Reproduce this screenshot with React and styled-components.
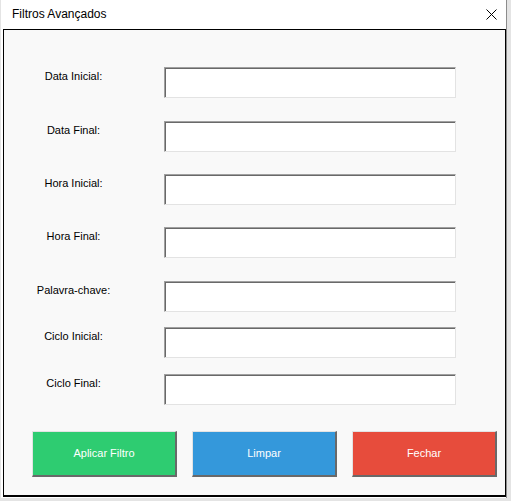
import React from "react";
import styled, { createGlobalStyle } from "styled-components";

const GlobalStyle = createGlobalStyle`
  body {
    margin: 0;
    background: #e4e4e4;
    font-family: "Liberation Sans", Arial, sans-serif;
  }
`;

const Window = styled.div`
  margin-left: 1px;
  width: 505px;
  height: 498px;
  background: #fff;
  border-right: 1px solid #8c8c8c;
  display: flex;
  flex-direction: column;
`;

const TitleBar = styled.div`
  height: 29px;
  flex-shrink: 0;
  display: flex;
  align-items: center;
  justify-content: space-between;
  padding: 0 9px 0 11px;
`;

const Title = styled.span`
  font-size: 12px;
  color: #000;
  margin-top: -1px;
`;

const CloseButton = styled.div`
  width: 12px;
  height: 12px;
  display: flex;
  align-items: center;
  justify-content: center;
`;

const Client = styled.div`
  flex-shrink: 0;
  margin-left: 2px;
  width: 501px;
  height: 428px;
  background: #f9f9f9;
  border: 1px solid #000;
  border-bottom-width: 2px;
  padding-top: 37px;
  box-sizing: content-box;
  display: flex;
  flex-direction: column;
`;

const Row = styled.div`
  display: grid;
  grid-template-columns: 139px 292px;
  column-gap: 21px;
  margin-bottom: ${(props) => props.$space}px;
`;

const Label = styled.label`
  font-size: 11px;
  line-height: 13px;
  padding-top: 3px;
  text-align: center;
  color: #000;
`;

const Input = styled.input`
  box-sizing: border-box;
  height: 31px;
  margin: 0;
  padding: 0 4px;
  background: #fff;
  border-top: 1px solid #a0a0a0;
  border-left: 1px solid #a0a0a0;
  border-right: 1px solid #e3e3e3;
  border-bottom: 1px solid #e3e3e3;
  box-shadow: inset 1px 1px 0 #696969;
  outline: none;
  font-family: "Liberation Sans", Arial, sans-serif;
  font-size: 11px;
`;

const ButtonRow = styled.div`
  display: flex;
  gap: 15px;
  padding-left: 28px;
  margin-top: 10px;
`;

const Button = styled.button`
  box-sizing: border-box;
  width: 145px;
  height: 46px;
  margin: 0;
  background: ${(props) => props.$color};
  border-top: 1px solid #e3e3e3;
  border-left: 1px solid #e3e3e3;
  border-right: 2px solid #696969;
  border-bottom: 2px solid #696969;
  color: #fff;
  font-family: "Liberation Sans", Arial, sans-serif;
  font-size: 11px;
  padding: 0 0 1px;
  cursor: pointer;
`;

const fields = [
  { label: "Data Inicial:", space: 23 },
  { label: "Data Final:", space: 22 },
  { label: "Hora Inicial:", space: 22 },
  { label: "Hora Final:", space: 23 },
  { label: "Palavra-chave:", space: 15 },
  { label: "Ciclo Inicial:", space: 16 },
  { label: "Ciclo Final:", space: 16 },
];

const buttons = [
  { text: "Aplicar Filtro", color: "#2ecc71" },
  { text: "Limpar", color: "#3498db" },
  { text: "Fechar", color: "#e74c3c" },
];

export default function App() {
  return (
    <>
      <GlobalStyle />
      <Window>
        <TitleBar>
          <Title>Filtros Avançados</Title>
          <CloseButton>
            <svg width="11" height="11" viewBox="0 0 11 11">
              <path d="M0.5 0.5 L10.5 10.5 M10.5 0.5 L0.5 10.5" stroke="#000" strokeWidth="1" fill="none" />
            </svg>
          </CloseButton>
        </TitleBar>
        <Client>
          {fields.map((f) => (
            <Row key={f.label} $space={f.space}>
              <Label>{f.label}</Label>
              <Input type="text" />
            </Row>
          ))}
          <ButtonRow>
            {buttons.map((b) => (
              <Button key={b.text} $color={b.color}>
                {b.text}
              </Button>
            ))}
          </ButtonRow>
        </Client>
      </Window>
    </>
  );
}
